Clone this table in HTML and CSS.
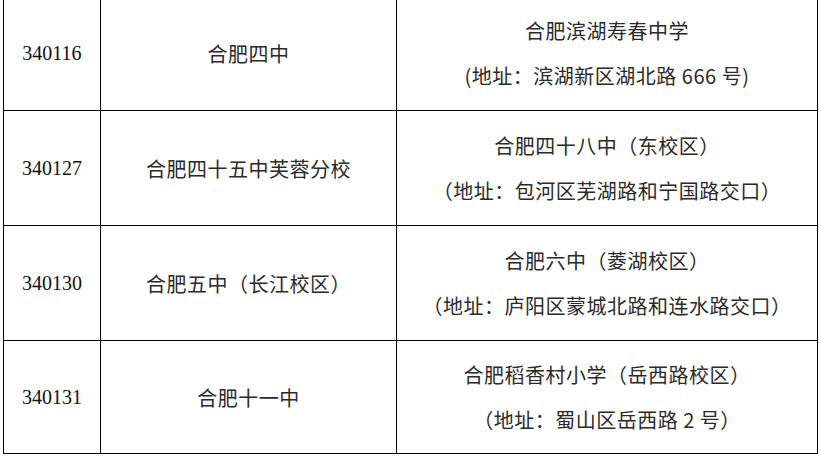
FILE: index.html
```html
<!DOCTYPE html>
<html lang="zh-CN">
<head>
<meta charset="utf-8">
<link rel="stylesheet" href="styles.css">
</head>
<body>
<table class="schools">
  <colgroup>
    <col class="c-code">
    <col class="c-name">
    <col class="c-target">
  </colgroup>
  <tbody>
    <tr>
      <td class="code">340116</td>
      <td class="name">合肥四中</td>
      <td class="target"><div class="line">合肥滨湖寿春中学</div><div class="line">(地址：滨湖新区湖北路 666 号)</div></td>
    </tr>
    <tr>
      <td class="code">340127</td>
      <td class="name">合肥四十五中芙蓉分校</td>
      <td class="target"><div class="line">合肥四十八中（东校区）</div><div class="line">（地址：包河区芜湖路和宁国路交口）</div></td>
    </tr>
    <tr>
      <td class="code">340130</td>
      <td class="name">合肥五中（长江校区）</td>
      <td class="target"><div class="line">合肥六中（菱湖校区）</div><div class="line">（地址：庐阳区蒙城北路和连水路交口）</div></td>
    </tr>
    <tr class="last">
      <td class="code">340131</td>
      <td class="name">合肥十一中</td>
      <td class="target"><div class="line">合肥稻香村小学（岳西路校区）</div><div class="line">（地址：蜀山区岳西路 2 号）</div></td>
    </tr>
  </tbody>
</table>
</body>
</html>
```

FILE: styles.css
```css
html, body {
  margin: 0;
  padding: 0;
  background: #fff;
}

body {
  overflow: hidden;
}

.schools {
  border-collapse: collapse;
  table-layout: fixed;
  width: 814px;
  margin: -5px 0 0 3px;
  font-family: "Noto Sans CJK SC", "Liberation Sans", sans-serif;
  font-size: 20px;
  letter-spacing: 0.5px;
  color: #2a2a2a;
}

.c-code { width: 97px; }
.c-name { width: 296px; }
.c-target { width: 421px; }

.schools td {
  border: 1px solid #000;
  height: 114px;
  padding: 0;
  text-align: center;
  vertical-align: middle;
}

.schools .last td {
  height: 112px;
}

.schools td.code {
  font-family: "Liberation Serif", serif;
  font-size: 20px;
  letter-spacing: 0;
  color: #111;
}

.line {
  line-height: 45px;
}
```
